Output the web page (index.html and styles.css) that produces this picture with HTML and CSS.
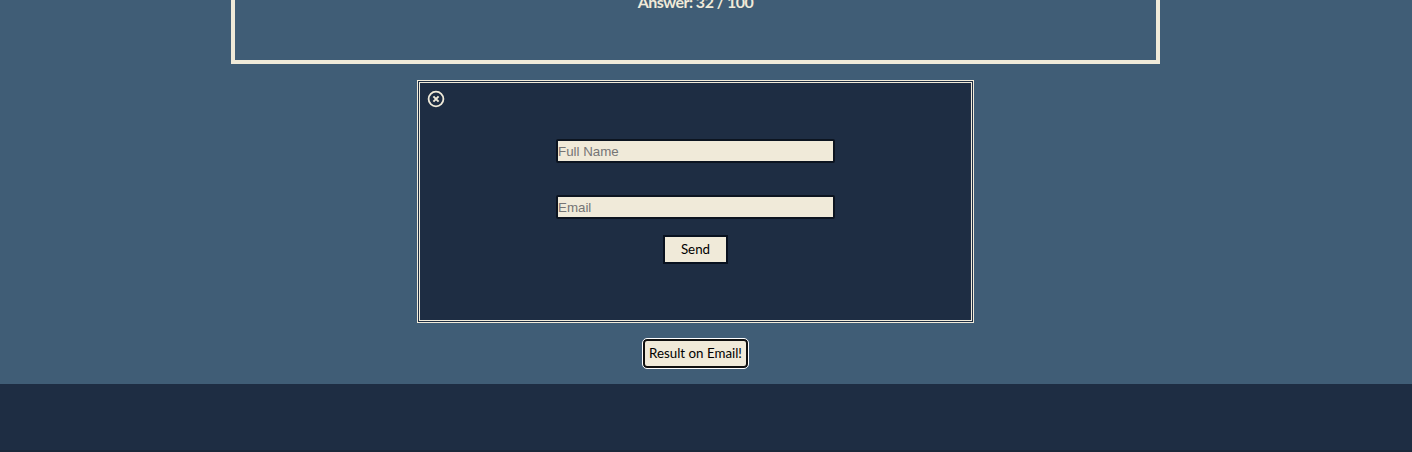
FILE: index.html
```
<!DOCTYPE html>
<html lang="en">
<head>
<meta charset="utf-8">
<title>Quiz result</title>
<link rel="stylesheet" href="styles.css">
</head>
<body>
<main class="page">
  <section class="result"><p class="answer">Answer: 32 / 100</p></section>
  <form class="panel">
    <button class="close" type="button" aria-label="Close">
      <svg width="18" height="18" viewBox="0 0 18 18" fill="none" stroke="currentColor">
        <circle cx="9" cy="9" r="7.4" stroke-width="1.8"/>
        <path d="M6.4 6.4l5.2 5.2M11.6 6.4l-5.2 5.2" stroke-width="2"/>
      </svg>
    </button>
    <input class="field" type="text" placeholder="Full Name">
    <input class="field" type="email" placeholder="Email">
    <button class="send" type="button">Send</button>
  </form>
  <button class="open" type="button">Result on Email!</button>
</main>
<footer class="footer"></footer>
</body>
</html>
```
FILE: styles.css
```
* { box-sizing: border-box; }
body {
  margin: 0;
  height: 452px;
  overflow: hidden;
  background: #1e2d43;
  font-family: Lato, "Open Sans", sans-serif;
}
.page {
  display: flex;
  flex-direction: column;
  align-items: center;
  height: 384px;
  padding-right: 21px;
  background: #405d76;
}
.result {
  flex: none;
  width: 929px;
  height: 64px;
  border: 4px solid #f0ead9;
  border-top: 0;
}
.answer {
  margin: -8px 0 0;
  color: #f0ead9;
  font-size: 16px;
  font-weight: 700;
  letter-spacing: -0.52px;
  line-height: 20px;
  text-align: center;
}
.panel {
  display: flex;
  flex: none;
  flex-direction: column;
  align-items: center;
  width: 557px;
  height: 243px;
  margin-top: 16px;
  padding-top: 7px;
  border: 3px double #f0ead9;
  background: #1e2d43;
}
.close {
  align-self: flex-start;
  width: 18px;
  height: 18px;
  margin: 0 0 31px 7px;
  padding: 0;
  border: 0;
  background: none;
  color: #f0ead9;
}
.close svg { display: block; }
.field {
  width: 279px;
  height: 24px;
  margin: 0 0 32px;
  padding: 0;
  border: 2px solid #0c1420;
  border-radius: 2px;
  background: #f0ead9;
  font: 13.333px/20px "Liberation Sans", Arial, sans-serif;
}
.field::placeholder { color: #757575; }
.send {
  width: 65px;
  height: 29px;
  margin-top: -16px;
  padding: 0 0 2px;
  border: 2px solid #08111f;
  background: #f0ead9;
  color: #000;
  font: 13.333px Lato, sans-serif;
}
.open {
  flex: none;
  width: 105px;
  height: 29px;
  margin-top: 16px;
  padding: 0 0 2px;
  border: 2px solid #101010;
  border-radius: 4px;
  outline: 1px solid #fff;
  background: #f0ead9;
  color: #000;
  font: 13.333px Lato, sans-serif;
  white-space: nowrap;
}
.footer {
  height: 68px;
  border-bottom: 2px solid #1b293b;
}
```
